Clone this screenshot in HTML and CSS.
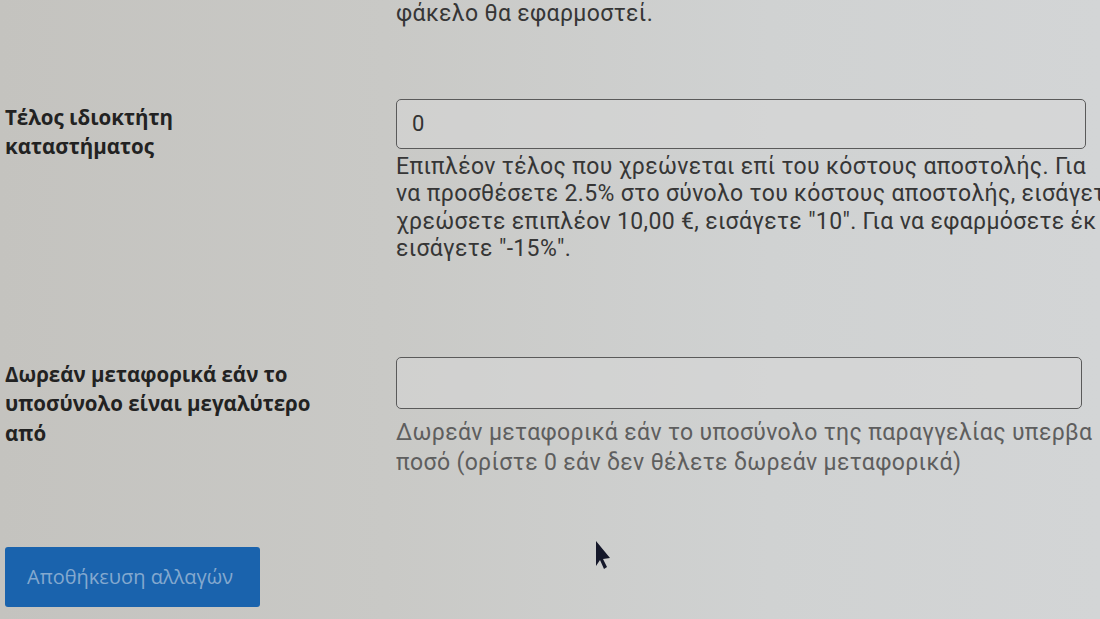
FILE: index.html
```html
<!DOCTYPE html>
<html lang="el">
<head>
<meta charset="utf-8">
<link rel="stylesheet" href="styles.css">
</head>
<body>
<div class="page">
  <div class="row row-top">
    <div class="label"></div>
    <div class="field">
      <p class="help help-dark">φάκελο θα εφαρμοστεί.</p>
    </div>
  </div>

  <div class="row row-fee">
    <label class="label" for="fee">Τέλος ιδιοκτήτη<br>καταστήματος</label>
    <div class="field">
      <input id="fee" class="input" type="text" value="0">
      <p class="help help-dark">Επιπλέον τέλος που χρεώνεται επί του κόστους αποστολής. Για<br>να προσθέσετε 2.5% στο σύνολο του κόστους αποστολής, εισάγετε<br>χρεώσετε επιπλέον 10,00 €, εισάγετε "10". Για να εφαρμόσετε έκ<br>εισάγετε "-15%".</p>
    </div>
  </div>

  <div class="row row-free">
    <label class="label" for="free">Δωρεάν μεταφορικά εάν το<br>υποσύνολο είναι μεγαλύτερο<br>από</label>
    <div class="field">
      <input id="free" class="input input-narrow" type="text" value="">
      <p class="help help-light">Δωρεάν μεταφορικά εάν το υποσύνολο της παραγγελίας υπερβα<br>ποσό (ορίστε 0 εάν δεν θέλετε δωρεάν μεταφορικά)</p>
    </div>
  </div>

  <div class="actions">
    <button class="btn" type="button">Αποθήκευση αλλαγών</button>
  </div>

  <svg class="cursor" width="16" height="30" viewBox="0 0 16 30" aria-hidden="true">
    <path d="M1 1 L1 26 L5 20 L9 29 L12 27 L8 19 L15 18 Z" fill="#15182a"/>
  </svg>
</div>
</body>
</html>
```

FILE: styles.css
```css
html, body {
  margin: 0;
  padding: 0;
  height: 100%;
  overflow: hidden;
}

body {
  background: linear-gradient(90deg, #c4c3bf 0%, #c9c9c6 35%, #d0d2d2 70%, #d3d5d6 100%);
  font-family: Roboto, "Liberation Sans", sans-serif;
  color: #333;
}

.page {
  position: relative;
  height: 619px;
}

.row {
  display: grid;
  grid-template-columns: 396px 704px;
}

.label {
  padding-left: 5px;
  font-family: "Open Sans", "Noto Sans", sans-serif;
  font-weight: 700;
  font-size: 20.5px;
  line-height: 29.5px;
  color: #222;
}

.field {
  display: flex;
  flex-direction: column;
  overflow: hidden;
}

.help {
  margin: 0;
  font-size: 23px;
  line-height: 27.5px;
  white-space: nowrap;
  letter-spacing: 0.35px;
}

.help-dark {
  color: #363636;
}

.help-light {
  color: #5e5e5e;
  line-height: 30.5px;
}

.row-top {
  margin-top: 0;
}

.row-fee {
  margin-top: 71px;
}

.row-fee .label {
  padding-top: 4px;
}

.input {
  box-sizing: border-box;
  width: 690px;
  height: 50px;
  margin: 0 0 4px;
  padding: 0 15px;
  border: 1.5px solid #5a5a5a;
  border-radius: 5px;
  background: rgba(215, 216, 216, 0.5);
  font-family: Roboto, "Liberation Sans", sans-serif;
  font-size: 22px;
  color: #333;
}

.input-narrow {
  width: 686px;
  height: 52px;
  margin-bottom: 9px;
}

.row-free {
  margin-top: 94px;
}

.row-free .label {
  padding-top: 3px;
}

.actions {
  margin-top: 68px;
  padding-left: 5px;
}

.btn {
  width: 255px;
  height: 60px;
  padding: 0 0 0 22px;
  border: 0;
  border-radius: 3px;
  background: #1a63ad;
  color: #84a9cf;
  font-family: "Open Sans", "Noto Sans", sans-serif;
  font-size: 20px;
  text-align: left;
}

.cursor {
  position: absolute;
  left: 595px;
  top: 540px;
}
```
